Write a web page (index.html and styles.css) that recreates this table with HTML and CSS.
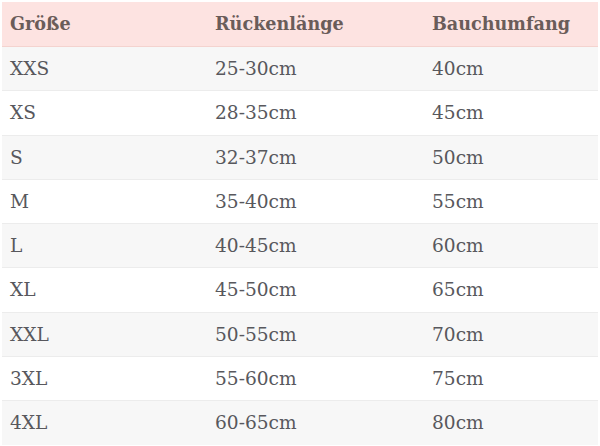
FILE: index.html
```html
<!DOCTYPE html>
<html lang="de">
<head>
<meta charset="utf-8">
<title>Größentabelle</title>
<link rel="stylesheet" href="styles.css">
</head>
<body>
<div class="wrap">
<table class="sizes">
<colgroup>
<col class="c1"><col class="c2"><col class="c3">
</colgroup>
<thead>
<tr><th>Größe</th><th>Rückenlänge</th><th>Bauchumfang</th></tr>
</thead>
<tbody>
<tr><td>XXS</td><td>25-30cm</td><td>40cm</td></tr>
<tr><td>XS</td><td>28-35cm</td><td>45cm</td></tr>
<tr><td>S</td><td>32-37cm</td><td>50cm</td></tr>
<tr><td>M</td><td>35-40cm</td><td>55cm</td></tr>
<tr><td>L</td><td>40-45cm</td><td>60cm</td></tr>
<tr><td>XL</td><td>45-50cm</td><td>65cm</td></tr>
<tr><td>XXL</td><td>50-55cm</td><td>70cm</td></tr>
<tr><td>3XL</td><td>55-60cm</td><td>75cm</td></tr>
<tr><td>4XL</td><td>60-65cm</td><td>80cm</td></tr>
</tbody>
</table>
</div>
</body>
</html>
```
FILE: styles.css
```css
html, body {
  margin: 0;
  padding: 0;
  background: #ffffff;
}
.wrap {
  padding: 2px;
}
.sizes {
  width: 596px;
  border-collapse: collapse;
  table-layout: fixed;
  font-family: "DejaVu Serif", "Liberation Serif", serif;
}
.c1 { width: 205px; }
.c2 { width: 217px; }
.c3 { width: 174px; }
.sizes th {
  text-align: left;
  font-weight: bold;
  font-size: 17.6px;
  line-height: 24px;
  padding: 10px 8px;
  color: #6a5c59;
  background: #fde3e1;
  border-bottom: 1px solid #f4d3cf;
}
.sizes td {
  text-align: left;
  font-size: 18.6px;
  line-height: 24px;
  padding: 10px 8px 9.3px;
  color: #58585d;
  border-bottom: 1px solid #ececec;
}
.sizes tbody tr:nth-child(odd) td {
  background: #f7f7f7;
}
.sizes tbody tr:last-child td {
  border-bottom: none;
}
```
